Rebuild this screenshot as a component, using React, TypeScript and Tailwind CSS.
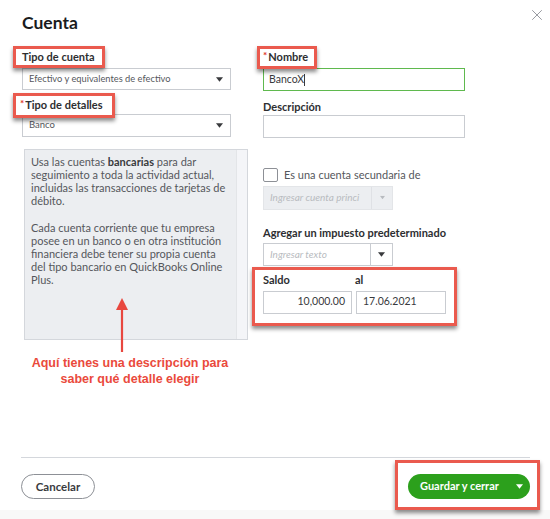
import { X } from "lucide-react";

const font = "[font-family:Lato,'Open_Sans',sans-serif]";

const Caret = ({ className = "" }: { className?: string }) => (
  <svg viewBox="0 0 8 5" className={`w-[7px] h-[5px] ${className}`}>
    <path d="M0 0h8L4 5z" fill="currentColor" />
  </svg>
);

// red annotation frame drawn over a label
const Marked = ({ children, className = "" }: { children: React.ReactNode; className?: string }) => (
  <div
    className={`relative z-10 bg-white border-[3px] border-[#ea5a4e] shadow-[0_3px_4px_rgba(0,0,0,0.45)] ${className}`}
  >
    {children}
  </div>
);

const Req = () => <span className="text-[#e0301e] text-[10px] mr-[1px] relative -top-[2px]">*</span>;

export default function App() {
  return (
    <div className={`relative w-[550px] h-[519px] bg-white overflow-hidden text-[#393a3d] ${font}`}>
      <header className="flex items-start justify-between pl-[22px] pr-[4px] pt-[11px] h-[46px]">
        <h1 className="text-[17.5px] font-bold text-[#1a1b1d] leading-[24px]">Cuenta</h1>
        <X className="w-[18px] h-[18px] text-[#8d9096] -mt-[5px]" strokeWidth={1.2} />
      </header>

      <div className="flex pl-[22px]">
        {/* left column */}
        <div className="relative w-[226px] flex flex-col">
          <Marked className="-ml-[9px] w-[92px] h-[22px] pl-[6px] flex items-center">
            <span className="text-[11px] font-bold text-[#2d2e31]">Tipo de cuenta</span>
          </Marked>
          <div className="w-[209px] h-[22px] border border-[#c9ccd1] flex items-center justify-between pl-[6px] pr-[7px]">
            <span className="text-[9.3px] text-[#55575c]">Efectivo y equivalentes de efectivo</span>
            <Caret className="text-[#393a3d]" />
          </div>

          <Marked className="-ml-[9px] mt-[3px] -mb-[4px] w-[102px] h-[25px] pl-[4px] flex items-center">
            <span className="text-[11px] font-bold text-[#2d2e31]">
              <Req />
              Tipo de detalles
            </span>
          </Marked>
          <div className="w-[209px] h-[23px] border border-[#c9ccd1] flex items-center justify-between pl-[6px] pr-[7px]">
            <span className="text-[9.5px] text-[#55575c]">Banco</span>
            <Caret className="text-[#393a3d]" />
          </div>

          <div className="ml-[2px] mt-[12px] w-[224px] h-[191px] border border-[#d4d7dc] bg-[#eceef1] flex">
            <div className="flex-1 px-[6px] pt-[5px] text-[11px] leading-[13px] text-[#55575c]">
              <p>
                Usa las cuentas <b className="font-bold text-[#393a3d]">bancarias</b> para dar seguimiento a toda la
                actividad actual, incluidas las transacciones de tarjetas de débito.
              </p>
              <p className="mt-[14px]">
                Cada cuenta corriente que tu empresa posee en un banco o en otra institución financiera debe tener su
                propia cuenta del tipo bancario en QuickBooks Online Plus.
              </p>
            </div>
            <div className="w-[11px] bg-[#f4f5f8] border-l border-[#e3e5e8]" />
          </div>

          {/* annotation arrow */}
          <svg className="absolute left-[92px] top-[252px] w-[16px] h-[54px]" viewBox="0 0 16 54">
            <path d="M8 8V54" stroke="#e8473f" strokeWidth="2.2" />
            <path d="M2 12L8 0l6 12z" fill="#e8473f" />
          </svg>

          <p className="mt-[15px] ml-[8px] w-[200px] text-center text-[12.5px] leading-[16px] font-bold text-[#ea4a3c] [font-family:'Liberation_Sans',Arial,sans-serif]">
            Aquí tienes una descripción para
            <br />
            saber qué detalle elegir
          </p>
        </div>

        {/* right column */}
        <div className="ml-[15px] w-[202px] flex flex-col">
          <Marked className="-ml-[6px] w-[60px] h-[23px] pl-[3px] flex items-center">
            <span className="text-[11px] font-bold text-[#2d2e31]">
              <Req />
              Nombre
            </span>
          </Marked>
          <div className="-mt-[1px] w-[202px] h-[23px] border border-[#5fb94e] flex items-center px-[5px]">
            <span className="text-[10.5px] text-[#393a3d]">BancoX</span>
            <span className="w-px h-[12px] bg-[#393a3d]" />
          </div>

          <label className="mt-[7px] text-[11px] font-bold text-[#2d2e31] leading-[17px]">Descripción</label>
          <div className="w-[202px] h-[23px] border border-[#c9ccd1]" />

          <div className="mt-[29px] flex items-center gap-[6px]">
            <div className="w-[15px] h-[14px] border border-[#8d9096] rounded-[2px] bg-white" />
            <span className="text-[11px] text-[#55575c]">Es una cuenta secundaria de</span>
          </div>
          <div className="mt-[2px] w-[130px] h-[24px] bg-[#eceef1] border border-[#e3e5e8] flex">
            <span className="flex-1 flex items-center pl-[6px] text-[10px] italic text-[#b8bbc0]">
              Ingresar cuenta princi
            </span>
            <span className="w-[21px] border-l border-[#dfe1e5] flex items-center justify-center">
              <Caret className="text-[#b8bbc0] scale-75" />
            </span>
          </div>

          <label className="mt-[14px] mb-[2px] text-[11px] font-bold text-[#2d2e31] leading-[17px]">
            Agregar un impuesto predeterminado
          </label>
          <div className="w-[130px] h-[23px] border border-[#c9ccd1] flex">
            <span className="flex-1 flex items-center pl-[6px] text-[10px] italic text-[#b8bbc0]">Ingresar texto</span>
            <span className="w-[22px] border-l border-[#c9ccd1] flex items-center justify-center">
              <Caret className="text-[#393a3d]" />
            </span>
          </div>

          <Marked className="mt-[1px] -ml-[11px] w-[205px] h-[59px] pl-[8px] pt-[2px]">
            <div className="flex text-[11px] font-bold text-[#2d2e31] leading-[16px]">
              <span className="w-[92px]">Saldo</span>
              <span>al</span>
            </div>
            <div className="mt-[3px] flex gap-[4px]">
              <div className="w-[89px] h-[23px] border border-[#c9ccd1] flex items-center justify-end pr-[6px] text-[10.5px] text-[#393a3d]">
                10,000.00
              </div>
              <div className="w-[90px] h-[23px] border border-[#c9ccd1] flex items-center pl-[6px] text-[10.5px] text-[#393a3d]">
                17.06.2021
              </div>
            </div>
          </Marked>
        </div>
      </div>

      {/* footer */}
      <div className="absolute left-0 right-0 top-[457px] bottom-0 flex flex-col">
        <div className="ml-[21px] mr-[20px] border-t border-[#d4d7dc]" />
        <div className="flex items-start justify-between pl-[21px] pr-[10px] pt-[2px]">
          <button className="mt-[14px] w-[74px] h-[25px] rounded-full border border-[#8d9096] text-[11.5px] font-bold text-[#393a3d]">
            Cancelar
          </button>
          <div className="relative z-10 border-[3px] border-[#ea5a4e] bg-white shadow-[0_3px_4px_rgba(0,0,0,0.45)] pl-[10px] pr-[7px] pt-[11px] pb-[8px]">
            <button className="w-[122px] h-[25px] rounded-full bg-[#2ca01c] text-white flex items-center pl-[12px] pr-[7px] justify-between">
              <span className="text-[11px] font-bold">Guardar y cerrar</span>
              <Caret className="text-white" />
            </button>
          </div>
        </div>
        <div className="mt-auto h-[11px] bg-[#f8f8f8]" />
      </div>
    </div>
  );
}
